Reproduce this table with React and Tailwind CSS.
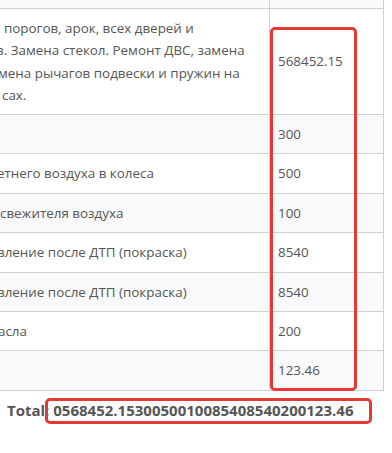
const ROWS = [
  { lines: [], amount: '300' },
  { lines: [{ text: 'етнего воздуха в колеса', shift: '-ml-[3px]' }], amount: '500' },
  { lines: [{ text: 'свежителя воздуха', shift: 'ml-0' }], amount: '100' },
  { lines: [{ text: 'вление после ДТП (покраска)', shift: '-ml-[3px]' }], amount: '8540' },
  { lines: [{ text: 'вление после ДТП (покраска)', shift: '-ml-[3px]' }], amount: '8540' },
  { lines: [{ text: 'асла', shift: '-ml-[2px]' }], amount: '200' },
  { lines: [], amount: '123.46' },
]

const FIRST = [
  { text: 'порогов, арок, всех дверей и', shift: 'ml-[4px]' },
  { text: 'в. Замена стекол. Ремонт ДВС, замена', shift: '-ml-[4px]' },
  { text: 'мена рычагов подвески и пружин на', shift: '-ml-[2px]' },
  { text: 'сах.', shift: 'ml-[2px]' },
]

const total = '0' + ['568452.15', ...ROWS.map((r) => r.amount)].join('')

function Row({ lines, amount, striped }) {
  return (
    <div className={`flex border-b border-[#d0d0d0] ${striped ? 'bg-[#f9f9fb]' : 'bg-white'}`}>
      <div className="w-[270px] shrink-0 overflow-hidden border-r border-[#d0d0d0] py-2 leading-[22.4px]">
        {lines.map((l, i) => (
          <div key={i} className={`whitespace-nowrap ${l.shift}`}>
            {l.text}
          </div>
        ))}
        {lines.length === 0 && <div>&nbsp;</div>}
      </div>
      <div className="w-[114px] shrink-0 border-r border-[#d0d0d0] px-2 py-2 leading-[22.4px]">{amount}</div>
    </div>
  )
}

export default function App() {
  return (
    <div className="relative h-[453px] w-[392px] overflow-hidden bg-white font-['Open_Sans',sans-serif] text-[13.4px] text-[#555]">
      <div className="w-[384px]">
        {/* tail of the row above */}
        <div className="flex h-[9px] border-b border-[#d0d0d0] bg-[#f9f9fb]">
          <div className="w-[270px] shrink-0 border-r border-[#d0d0d0]" />
          <div className="w-[114px] shrink-0 border-r border-[#d0d0d0]" />
        </div>

        <div className="flex border-b border-[#d0d0d0] bg-white">
          <div className="w-[270px] shrink-0 overflow-hidden border-r border-[#d0d0d0] py-2 leading-[22.25px]">
            {FIRST.map((l, i) => (
              <div key={i} className={`whitespace-nowrap ${l.shift}`}>
                {l.text}
              </div>
            ))}
          </div>
          <div className="flex w-[114px] shrink-0 items-center border-r border-[#d0d0d0] px-2">568452.15</div>
        </div>

        {ROWS.map((r, i) => (
          <Row key={i} {...r} striped={i % 2 === 0} />
        ))}
      </div>

      <div className="pl-[7px] pt-[9px] text-[15px] font-bold leading-[20px] text-[#555]">
        Total: <span>{total}</span>
      </div>

      {/* highlight frames */}
      <div className="pointer-events-none absolute left-[270px] top-[27px] h-[364px] w-[87px] rounded-[5px] border-[3px] border-[#e53935]" />
      <div className="pointer-events-none absolute left-[45px] top-[398px] h-[26px] w-[327px] rounded-[5px] border-[3px] border-[#e53935]" />
    </div>
  )
}
